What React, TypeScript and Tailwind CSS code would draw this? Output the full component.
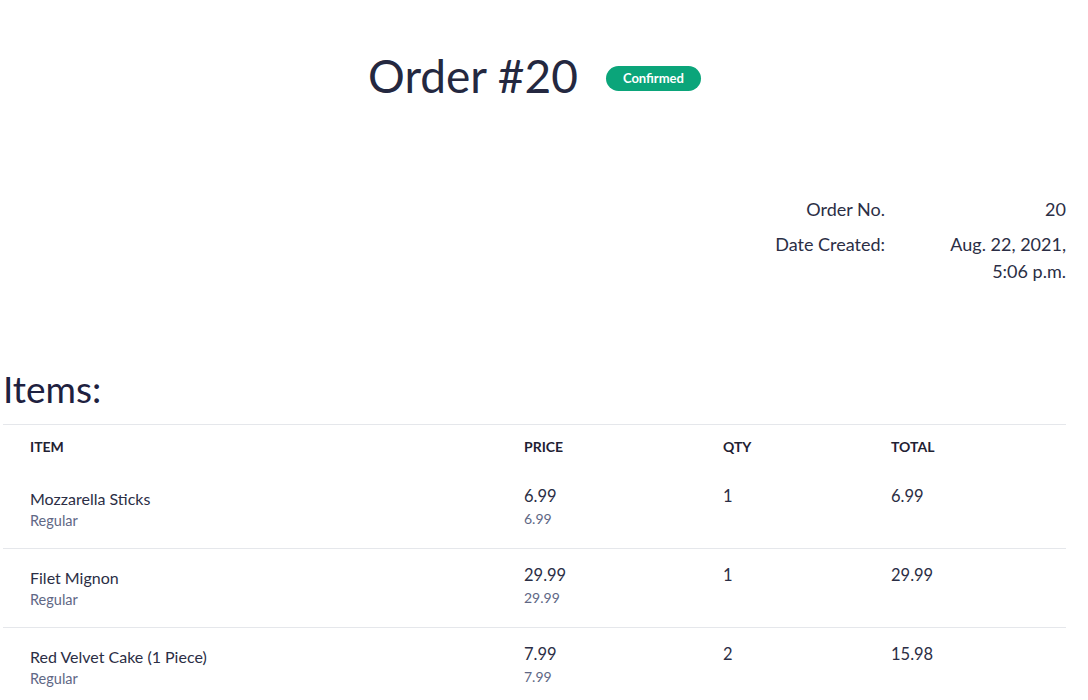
const items = [
  { name: "Mozzarella Sticks", variant: "Regular", price: "6.99", qty: 1, total: "6.99" },
  { name: "Filet Mignon", variant: "Regular", price: "29.99", qty: 1, total: "29.99" },
  { name: "Red Velvet Cake (1 Piece)", variant: "Regular", price: "7.99", qty: 2, total: "15.98" },
]

const App = () => {
  return (
    <div className="min-h-[700px] bg-white text-[#2b2e45]" style={{ fontFamily: "Lato, 'Noto Sans', sans-serif" }}>
      <div className="w-[1063px] ml-[3px]">
        <div className="flex items-center justify-center gap-7 pt-[48px] h-[104px]">
          <h1 className="text-[46px] leading-none text-[#242840]">Order #20</h1>
          <span className="mt-[5px] rounded-full bg-[#0ba57a] px-[17px] h-[25px] flex items-center text-[13px] font-bold text-white">Confirmed</span>
        </div>

        <div className="flex justify-end mt-[94px] text-[18px]">
          <div className="grid grid-cols-[auto_181px] gap-y-[13px]">
            <div className="text-right leading-[22px]">Order No.</div>
            <div className="text-right leading-[22px]">20</div>
            <div className="text-right leading-[22px]">Date Created:</div>
            <div className="text-right leading-[27px] -mt-[2px]">
              Aug. 22, 2021,<br />5:06 p.m.
            </div>
          </div>
        </div>

        <h2 className="mt-[85px] text-[37px] leading-none text-[#1e2140]">Items:</h2>

        <table className="mt-[17px] w-full border-t border-[#e5e7eb] table-fixed">
          <thead>
            <tr className="text-[14px] font-bold uppercase text-[#1f2233]">
              <th className="w-[521px] pl-[27px] pt-[11px] pb-[13px] text-left">Item</th>
              <th className="w-[199px] pt-[11px] pb-[13px] text-left">Price</th>
              <th className="w-[168px] pt-[11px] pb-[13px] text-left">Qty</th>
              <th className="pt-[11px] pb-[13px] text-left">Total</th>
            </tr>
          </thead>
          <tbody>
            {items.map((item, i) => (
              <tr key={item.name} className={i < items.length - 1 ? "border-b border-[#e5e7eb]" : ""}>
                <td className="pl-[27px] pt-[18px] pb-[16px] align-top">
                  <div className="text-[16px] leading-[22px]">{item.name}</div>
                  <div className="text-[14.5px] leading-[22px] text-[#606785]">{item.variant}</div>
                </td>
                <td className="pt-[15px] align-top">
                  <div className="text-[16.5px] leading-[22px]">{item.price}</div>
                  <div className="text-[14px] leading-[24px] text-[#606785]">{item.price}</div>
                </td>
                <td className="pt-[15px] align-top text-[16.5px] leading-[22px]">{item.qty}</td>
                <td className="pt-[15px] align-top text-[16.5px] leading-[22px]">{item.total}</td>
              </tr>
            ))}
          </tbody>
        </table>
      </div>
    </div>
  )
}

export default App
